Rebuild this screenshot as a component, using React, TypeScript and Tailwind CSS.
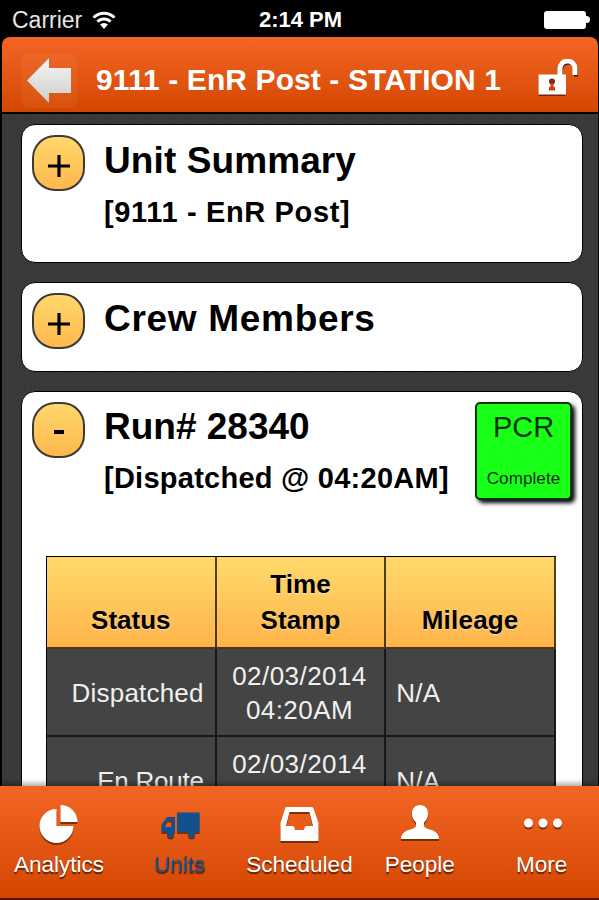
import type { ReactNode } from "react";

const runs = [
  { status: "Dispatched", spacing: "tracking-[0.2px]", date: "02/03/2014", time: "04:20AM", mileage: "N/A" },
  { status: "En Route", spacing: "tracking-[-0.25px]", date: "02/03/2014", time: "04:20AM", mileage: "N/A" },
];

const tabs = [
  {
    label: "Analytics",
    offset: "pr-[2px]",
    icon: (
      <>
        <path d="M17.500 6v17h17A17 17 0 1 1 17.500 6z" />
        <path d="M21.500 2a17 17 0 0 1 17 17h-17z" />
      </>
    ),
  },
  {
    label: "Units",
    offset: "",
    active: true,
    icon: (
      <>
        <path d="M17 9.500h22.500V29H17z" />
        <path fillRule="evenodd" d="M15 14v15H1.500v-7.500L7 14zM7.500 17.500L5 21.500v2.500h6.500v-6.500z" />
        <circle cx="10.500" cy="31" r="3.500" />
        <circle cx="31.500" cy="31" r="3.500" />
      </>
    ),
  },
  {
    label: "Scheduled",
    offset: "",
    icon: <path fillRule="evenodd" d="M7 4h26q1 0 1.500 1.500L39.500 20v18h-38V20L6 5.500Q6.500 4 7 4zM10.500 9L7 23h6.500q2 0 2.500 4h9q.5-4 2.500-4H34L30.500 9z" />,
  },
  {
    label: "People",
    offset: "pl-[1px]",
    icon: <path d="M20 2c5 0 8 3.500 8 8.500 0 4-1.500 7-4 9v3c0 2.500 3 3 6 4 5 1.500 9 4 9 9.500H1c0-5.500 4-8 9-9.500 3-1 6-1.500 6-4v-3c-2.500-2-4-5-4-9C12 5.500 15 2 20 2z" />,
  },
  {
    label: "More",
    offset: "pl-[5px]",
    icon: (
      <>
        <circle cx="6.500" cy="20" r="4.500" />
        <circle cx="21" cy="20" r="4.500" />
        <circle cx="35.500" cy="20" r="4.500" />
      </>
    ),
  },
];

function StatusBar() {
  return (
    <div className="grid h-[37px] shrink-0 grid-cols-3 items-center bg-black px-3 text-[23px] leading-none text-[#e5e5e5]">
      <div className="flex items-center gap-[10px] pt-[3px]">
        <span>Carrier</span>
        <svg className="h-[18px] w-6" viewBox="0 0 24 18" fill="none" stroke="white" strokeWidth="3">
          <path d="M1.500 6.500a15 15 0 0 1 21 0M5.500 10.800a9.200 9.200 0 0 1 13 0" />
          <path d="M8 13.500a5.800 5.800 0 0 1 8 0L12 18z" fill="white" stroke="none" />
        </svg>
      </div>
      <span className="pt-[3px] pl-[2px] text-center text-[22px] font-bold whitespace-nowrap text-white">2:14 PM</span>
      <div className="-mr-[3px] flex items-center justify-end pt-[2px]">
        <span className="h-[18px] w-[42px] rounded-[3px] bg-white" />
        <span className="h-[7px] w-1 rounded-r-full bg-white" />
      </div>
    </div>
  );
}

function Header() {
  return (
    <header className="mr-px ml-[2px] flex h-[77px] shrink-0 items-center rounded-t-[8px] border-b-2 border-black bg-linear-to-b from-[#f26522] to-[#d44700] pt-[10px] text-white">
      <div className="mt-[2px] ml-[19px] flex h-[55px] w-[56px] items-center justify-center rounded-[9px] bg-white/5">
        <svg className="h-[45px] w-11" viewBox="0 0 44 45">
          <defs>
            <linearGradient id="arrow" x1="0" y1="0" x2="0" y2="1">
              <stop offset="0" stopColor="#f5f5f3" />
              <stop offset="1" stopColor="#cdcdcd" />
            </linearGradient>
          </defs>
          <path d="M0 22.500L22 0v10h22v25H22v10z" fill="url(#arrow)" />
        </svg>
      </div>
      <h1 className="ml-[19px] w-[410px] text-[30px] leading-none font-bold tracking-[0.1px] whitespace-nowrap">
        9111 - EnR Post - STATION 1
      </h1>
      <svg className="mb-[5px] ml-[32px] h-[37px] w-10" viewBox="0 0 40 37">
        <path d="M23 15v-4a7.500 7.500 0 0 1 15 0v6.500" fill="none" stroke="black" strokeOpacity=".75" strokeWidth="4" />
        <path d="M.5 17h27v20h-27z" fill="black" opacity=".5" />
        <path d="M22 17V9.500a7.500 7.500 0 0 1 15 0V16" fill="none" stroke="white" strokeWidth="5" />
        <path d="M.5 15.500h27.500v20H.5z" fill="white" />
        <circle cx="14" cy="22.500" r="3" fill="#7c2a18" />
        <path d="M12.500 24h3v4H17v3.500h-6V28h1.500z" fill="#c83c14" />
      </svg>
    </header>
  );
}

function Toggle({ open = false }: { open?: boolean }) {
  return (
    <button className="flex h-14 w-[53px] shrink-0 items-center justify-center rounded-[23px] border-2 border-[#3d3a35] bg-linear-to-b from-[#ffd76c] to-[#ffb84d]">
      <svg className="mt-[5px] h-[22px] w-[22px]" viewBox="0 0 22 22" stroke="black" strokeWidth="3.2">
        {open ? <path d="M6 10h10" strokeWidth="4" /> : <path d="M0 11h22M11 0v22" />}
      </svg>
    </button>
  );
}

function Panel({ className, children }: { className: string; children: ReactNode }) {
  return (
    <section className={`shrink-0 rounded-[14px] border border-black bg-white ${className}`}>{children}</section>
  );
}

function RunTable() {
  return (
    <table className="mt-[52px] ml-[24px] w-[510px] table-fixed border-separate border-spacing-0 border-t border-l border-black text-[26px] leading-[34px] text-[#f0f0f0]">
      <thead>
        <tr className="h-[92px] bg-linear-to-b from-[#ffda6b] to-[#ffb34a] text-center align-bottom leading-[36px] font-bold text-black [text-shadow:0_1px_1px_#fff8]">
          <th className="border-r-2 border-b-2 border-black/70 pb-[9px]">Status</th>
          <th className="border-r-2 border-b-2 border-black/70 px-8 pb-[9px] tracking-[0.1px]">Time Stamp</th>
          <th className="border-r-2 border-b-2 border-black/70 pb-[9px] tracking-[0.2px]">Mileage</th>
        </tr>
      </thead>
      <tbody className="bg-[#444]">
        {runs.map((run) => (
          <tr key={run.status} className="h-[88px]">
            <td className={`border-r-2 border-b-2 border-[#181818] pt-px pr-[11px] text-right ${run.spacing}`}>{run.status}</td>
            <td className="border-r-2 border-b-2 border-[#181818] pt-px pr-[2px] text-center tracking-[0.45px]">
              {run.date}
              <br />
              {run.time}
            </td>
            <td className="border-r-2 border-b-2 border-[#181818] pt-px pl-[10px] tracking-[0.2px]">{run.mileage}</td>
          </tr>
        ))}
      </tbody>
    </table>
  );
}

function TabBar() {
  return (
    <nav className="z-10 grid h-[114px] shrink-0 grid-cols-5 border-b-2 border-[#501800] bg-linear-to-b from-[#f26522] to-[#d44700] pt-[17px] shadow-[0_-2px_6px_#0006]">
      {tabs.map((tab) => (
        <a
          key={tab.label}
          className={`flex flex-col items-center text-[22.5px] leading-[28px] ${tab.offset} ${tab.active ? "text-[#11528d]" : "text-white"}`}
        >
          <svg className="mb-[8px] h-10 w-10 shrink-0 overflow-visible fill-current [filter:drop-shadow(0_2px_0_#0007)]" viewBox="0 0 40 40">
            {tab.icon}
          </svg>
          <span className="[text-shadow:0_2px_1px_#0009]">{tab.label}</span>
        </a>
      ))}
    </nav>
  );
}

export default function App() {
  return (
    <div className="flex h-[900px] w-[599px] flex-col overflow-hidden bg-black font-['Liberation_Sans',Arial,sans-serif]">
      <StatusBar />
      <Header />
      <main className="mr-px ml-[2px] flex min-h-0 flex-1 flex-col gap-[19px] overflow-hidden bg-[#38393a] bg-[repeating-linear-gradient(90deg,#ffffff03_0_1px,transparent_1px_5px)] pt-[10px] pr-[15px] pl-[19px] text-black">
        <Panel className="flex h-[139px] gap-[19px] pt-[10px] pl-[10px]">
          <Toggle />
          <div>
            <h2 className="mt-[5px] text-[37px] leading-[42px] font-bold tracking-[0.1px]">Unit Summary</h2>
            <p className="mt-[13px] text-[29px] leading-[34px] font-bold tracking-[0.65px]">[9111 - EnR Post]</p>
          </div>
        </Panel>
        <Panel className="flex h-[90px] gap-[19px] pt-[10px] pl-[10px]">
          <Toggle />
          <h2 className="mt-[5px] text-[37px] leading-[42px] font-bold tracking-[0.7px]">Crew Members</h2>
        </Panel>
        <Panel className="h-[500px] pt-[10px]">
          <div className="flex h-[102px] gap-[19px] pl-[10px]">
            <Toggle open />
            <div className="w-[352px]">
              <h2 className="mt-[4px] text-[37px] leading-[42px] font-bold">Run# 28340</h2>
              <p className="mt-[13px] text-[29px] leading-[34px] font-bold tracking-[0.25px] whitespace-nowrap">[Dispatched @ 04:20AM]</p>
            </div>
            <div className="flex h-[98px] w-[97px] flex-col items-center rounded-[5px] border-2 border-[#063306] bg-[#18ff18] text-[#063006] shadow-[3px_3px_4px_#000]">
              <span className="mt-[6px] text-[29px] leading-[34px]">PCR</span>
              <span className="mt-[25px] text-[17px] leading-5 tracking-[0.1px]">Complete</span>
            </div>
          </div>
          <RunTable />
        </Panel>
      </main>
      <TabBar />
    </div>
  );
}
